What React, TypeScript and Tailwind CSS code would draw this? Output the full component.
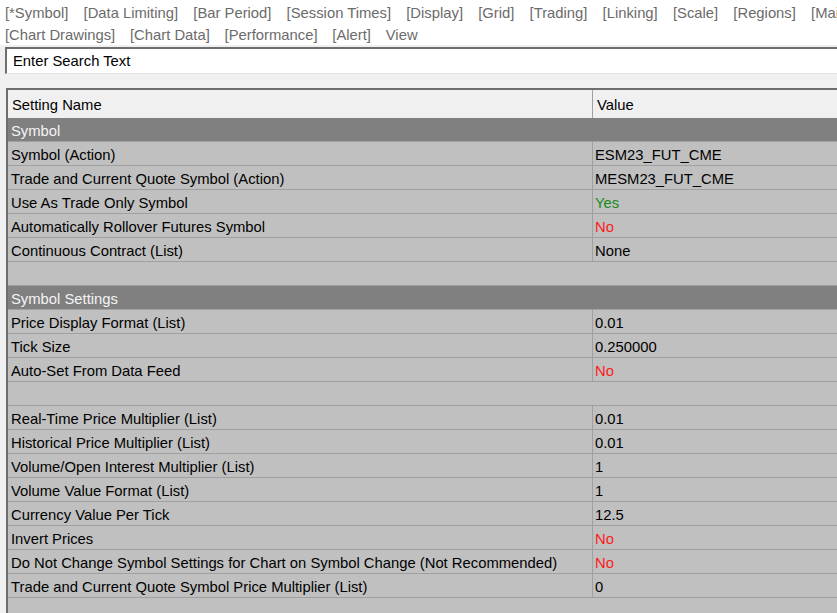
import React from 'react'

type Row =
  | { kind: 'group'; label: string }
  | { kind: 'blank' }
  | { kind: 'item'; name: string; value: string; tone?: 'yes' | 'no' }

const TABS_1 = ['[*Symbol]', '[Data Limiting]', '[Bar Period]', '[Session Times]', '[Display]', '[Grid]', '[Trading]', '[Linking]', '[Scale]', '[Regions]', '[Main Price Graph]']
const TABS_2 = ['[Chart Drawings]', '[Chart Data]', '[Performance]', '[Alert]', 'View']

const ROWS: Row[] = [
  { kind: 'group', label: 'Symbol' },
  { kind: 'item', name: 'Symbol (Action)', value: 'ESM23_FUT_CME' },
  { kind: 'item', name: 'Trade and Current Quote Symbol (Action)', value: 'MESM23_FUT_CME' },
  { kind: 'item', name: 'Use As Trade Only Symbol', value: 'Yes', tone: 'yes' },
  { kind: 'item', name: 'Automatically Rollover Futures Symbol', value: 'No', tone: 'no' },
  { kind: 'item', name: 'Continuous Contract (List)', value: 'None' },
  { kind: 'blank' },
  { kind: 'group', label: 'Symbol Settings' },
  { kind: 'item', name: 'Price Display Format (List)', value: '0.01' },
  { kind: 'item', name: 'Tick Size', value: '0.250000' },
  { kind: 'item', name: 'Auto-Set From Data Feed', value: 'No', tone: 'no' },
  { kind: 'blank' },
  { kind: 'item', name: 'Real-Time Price Multiplier (List)', value: '0.01' },
  { kind: 'item', name: 'Historical Price Multiplier (List)', value: '0.01' },
  { kind: 'item', name: 'Volume/Open Interest Multiplier (List)', value: '1' },
  { kind: 'item', name: 'Volume Value Format (List)', value: '1' },
  { kind: 'item', name: 'Currency Value Per Tick', value: '12.5' },
  { kind: 'item', name: 'Invert Prices', value: 'No', tone: 'no' },
  { kind: 'item', name: 'Do Not Change Symbol Settings for Chart on Symbol Change (Not Recommended)', value: 'No', tone: 'no' },
  { kind: 'item', name: 'Trade and Current Quote Symbol Price Multiplier (List)', value: '0' },
]

function TabRow({ tabs, gap }: { tabs: string[]; gap: string }) {
  return (
    <div className={`flex h-[22px] items-center ${gap} whitespace-nowrap overflow-hidden pl-[5px]`}>
      {tabs.map(t => (
        <span key={t} className="text-[#6b6b6b]">{t}</span>
      ))}
    </div>
  )
}

function SettingRow({ row }: { row: Row }) {
  if (row.kind === 'group') {
    return (
      <div className="h-[24px] flex items-center pt-[3px] bg-[#808080] text-[#f4f4f4] pl-[3px] border-b border-[#a0a0a0]">
        {row.label}
      </div>
    )
  }
  if (row.kind === 'blank') {
    return <div className="h-[24px] border-b border-[#a0a0a0]" />
  }
  const tone = row.tone === 'yes' ? 'text-[#1a8a1a]' : row.tone === 'no' ? 'text-[#ff1a1a]' : 'text-black'
  return (
    <div className="h-[24px] flex border-b border-[#a0a0a0]">
      <div className="w-[585px] shrink-0 flex items-center pt-[3px] pl-[3px] border-r border-[#a0a0a0] whitespace-nowrap">{row.name}</div>
      <div className={`flex-1 flex items-center pt-[3px] pl-[2px] ${tone}`}>{row.value}</div>
    </div>
  )
}

export default function App() {
  return (
    <div className="w-[837px] h-[613px] overflow-hidden bg-[#f0f0f0] text-[14.8px] font-['Liberation_Sans',Arial,sans-serif]">
      {/* Tabs */}
      <div className="bg-white pt-[2px] h-[45px]">
        <TabRow tabs={TABS_1} gap="gap-[15.2px]" />
        <TabRow tabs={TABS_2} gap="gap-[14.8px]" />
      </div>

      {/* Search */}
      <div className="pt-[2px] pl-[5px]">
        <div className="h-[27px] bg-white border-t-2 border-l-2 border-t-[#6e6e6e] border-l-[#6e6e6e] border-b border-b-[#e3e3e3] flex items-center pl-[6px] text-black">
          Enter Search Text
        </div>
      </div>

      {/* Grid */}
      <div className="mt-[14px] ml-[6px] h-[600px] bg-[#c0c0c0] border-t-2 border-l-2 border-[#6e6e6e]">
        <div className="h-[28px] flex bg-[#f0f0f0] text-black">
          <div className="w-[585px] shrink-0 flex items-center pt-[2px] pl-[4px] border-r border-[#a0a0a0]">Setting Name</div>
          <div className="flex-1 flex items-center pt-[2px] pl-[4px]">Value</div>
        </div>
        {ROWS.map((r, i) => (
          <SettingRow key={i} row={r} />
        ))}
      </div>
    </div>
  )
}
